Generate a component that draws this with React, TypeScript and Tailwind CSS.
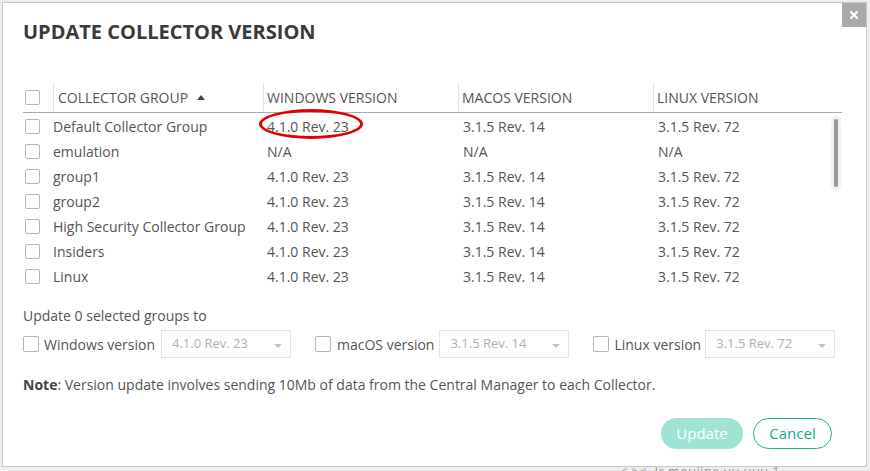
import { X } from 'lucide-react';

const rows = [
  { name: 'Default Collector Group', win: '4.1.0 Rev. 23', mac: '3.1.5 Rev. 14', linux: '3.1.5 Rev. 72' },
  { name: 'emulation', win: 'N/A', mac: 'N/A', linux: 'N/A' },
  { name: 'group1', win: '4.1.0 Rev. 23', mac: '3.1.5 Rev. 14', linux: '3.1.5 Rev. 72' },
  { name: 'group2', win: '4.1.0 Rev. 23', mac: '3.1.5 Rev. 14', linux: '3.1.5 Rev. 72' },
  { name: 'High Security Collector Group', win: '4.1.0 Rev. 23', mac: '3.1.5 Rev. 14', linux: '3.1.5 Rev. 72' },
  { name: 'Insiders', win: '4.1.0 Rev. 23', mac: '3.1.5 Rev. 14', linux: '3.1.5 Rev. 72' },
  { name: 'Linux', win: '4.1.0 Rev. 23', mac: '3.1.5 Rev. 14', linux: '3.1.5 Rev. 72' },
];

function Box({ className = '' }: { className?: string }) {
  return <span className={`block w-[15px] h-[15px] border border-[#b5b5b5] rounded-[2px] bg-white shrink-0 ${className}`} />;
}

function VersionSelect({ value }: { value: string }) {
  return (
    <div className="flex items-center justify-between w-[130px] h-[28px] border border-[#e3e3e3] bg-white pl-[10px] pr-[8px]">
      <span className="text-[13px] text-[#b0b0b0]">{value}</span>
      <span className="w-0 h-0 border-l-[4px] border-r-[4px] border-t-[4px] border-l-transparent border-r-transparent border-t-[#c5c5c5] mt-[4px]" />
    </div>
  );
}

export default function App() {
  return (
    <div
      className="w-[870px] h-[471px] bg-[#eeeeee] pt-[2px] pl-[2px] overflow-hidden relative"
      style={{ fontFamily: '"Open Sans", sans-serif' }}
    >
      {/* faint page text behind the dialog */}
      <div className="absolute left-[620px] top-[463px] text-[13px] leading-[16px] text-[#9a9a9a] tracking-wide">
        &lt; &gt;&lt; &nbsp;Ir mouiine uu uuu 1
      </div>

      <div className="relative w-[865px] h-[465px] bg-white border border-[#c8c8c8] text-[#555]">
        {/* close */}
        <button className="absolute right-0 top-0 w-[24px] h-[24px] bg-[#aaaaaa] flex items-center justify-center">
          <X size={12} strokeWidth={4} className="text-white" />
        </button>

        <div className="pl-[20px] pr-[24px]">
          <h2 className="pt-[14px] text-[20px] font-bold text-[#3a3a3a]">
            UPDATE COLLECTOR VERSION
          </h2>

          {/* table */}
          <div className="mt-[36px] relative">
            <div className="flex items-center h-[30px] border-b border-[#aaaaaa] text-[14px] text-[#555]">
              <div className="w-[30px] flex pl-[2px]">
                <Box />
              </div>
              <div className="w-[210px] h-full flex items-center border-l border-[#e2e2e2] pl-[4px] gap-[9px]">
                COLLECTOR GROUP
                <span className="w-0 h-0 border-l-[4px] border-r-[4px] border-b-[5px] border-l-transparent border-r-transparent border-b-[#444]" />
              </div>
              <div className="w-[195px] h-full flex items-center border-l border-[#e2e2e2] pl-[3px]">WINDOWS VERSION</div>
              <div className="w-[195px] h-full flex items-center border-l border-[#e2e2e2] pl-[3px]">MACOS VERSION</div>
              <div className="flex-1 h-full flex items-center border-l border-[#e2e2e2] pl-[3px]">LINUX VERSION</div>
            </div>

            <div className="pt-[1px] h-[177px] relative text-[14px] text-[#555]">
              {rows.map((r, i) => (
                <div key={r.name} className="flex items-center h-[25px]">
                  <div className="w-[30px] flex pl-[2px]">
                    <Box />
                  </div>
                  <div className="w-[210px]">{r.name}</div>
                  <div className="w-[195px] pl-[4px] relative">
                    {r.win}
                    {i === 0 && (
                      <span className="absolute left-[-4px] top-[-7px] w-[104px] h-[30px] border-[3px] border-[#e00000] rounded-[50%]" />
                    )}
                  </div>
                  <div className="w-[195px] pl-[5px]">{r.mac}</div>
                  <div className="flex-1 pl-[5px]">{r.linux}</div>
                </div>
              ))}
              {/* scrollbar */}
              <div className="absolute right-[1px] top-[3px] w-[10px] h-[74px] rounded-full bg-[#f1f1f1] flex justify-center pt-[3px]">
                <div className="w-[4px] h-[68px] rounded-full bg-[#9a9a9a]" />
              </div>
            </div>
          </div>

          {/* update options */}
          <p className="mt-[15px] text-[14px] text-[#555]">Update 0 selected groups to</p>
          <div className="mt-[4px] flex items-center text-[14px] text-[#555]">
            <Box className="w-[16px] h-[16px]" />
            <span className="ml-[5px] mr-[6px]">Windows version</span>
            <VersionSelect value="4.1.0 Rev. 23" />
            <Box className="ml-[24px] w-[16px] h-[16px]" />
            <span className="ml-[6px] mr-[5px]">macOS version</span>
            <VersionSelect value="3.1.5 Rev. 14" />
            <Box className="ml-[24px] w-[16px] h-[16px]" />
            <span className="ml-[5px] mr-[4px]">Linux version</span>
            <VersionSelect value="3.1.5 Rev. 72" />
          </div>

          <p className="mt-[16px] text-[14px] text-[#555]">
            <span className="font-bold text-[#444]">Note</span>: Version update involves sending 10Mb of data from the
            Central Manager to each Collector.
          </p>

          <div className="mt-[23px] flex justify-end gap-[10px] pr-[10px]">
            <button className="w-[82px] h-[31px] rounded-full bg-[#9fe3d5] text-white text-[15px]">Update</button>
            <button className="w-[79px] h-[31px] rounded-full border border-[#1ab394] text-[#1aa88a] text-[15px] bg-white">
              Cancel
            </button>
          </div>
        </div>
      </div>
    </div>
  );
}
